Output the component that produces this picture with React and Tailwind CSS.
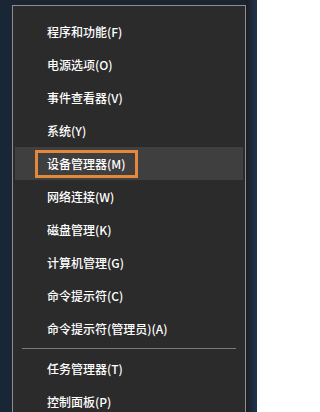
const items = [
  { label: "程序和功能(F)" },
  { label: "电源选项(O)" },
  { label: "事件查看器(V)" },
  { label: "系统(Y)" },
  { label: "设备管理器(M)", active: true },
  { label: "网络连接(W)" },
  { label: "磁盘管理(K)" },
  { label: "计算机管理(G)" },
  { label: "命令提示符(C)" },
  { label: "命令提示符(管理员)(A)" },
]

const bottomItems = [{ label: "任务管理器(T)" }, { label: "控制面板(P)" }]

function MenuRow({ item }) {
  return (
    <div
      className={`mx-[2px] h-[33px] flex items-center pl-[20px] ${item.active ? "bg-[#3f3f3f]" : ""}`}
    >
      <span
        className={`h-[28px] flex items-center px-[9px] border-[3px] ${
          item.active ? "border-[#e3893c]" : "border-transparent"
        }`}
      >
        {item.label}
      </span>
    </div>
  )
}

export default function App() {
  return (
    <div
      className="w-[257px] h-[412px] overflow-hidden flex bg-[#172331]"
      style={{ fontFamily: '"Noto Sans CJK SC", "Liberation Sans", sans-serif' }}
    >
      <div className="w-[12px] shrink-0 bg-[#182636]" />
      <div className="w-[234px] shrink-0 pt-[5px] bg-[#1b2430]">
        <div className="h-[420px] bg-[#2b2b2b] border border-[#8e8e8e] pt-[9px] text-[12px] font-medium text-white">
          {items.map((item) => (
            <MenuRow key={item.label} item={item} />
          ))}
          <div className="mx-[9px] mt-[3px] mb-[3px] h-px bg-[#7a7a7a]" />
          {bottomItems.map((item) => (
            <MenuRow key={item.label} item={item} />
          ))}
        </div>
      </div>
      <div className="flex-1 bg-gradient-to-r from-[#1d1d22] to-[#1b3550]" />
    </div>
  )
}
